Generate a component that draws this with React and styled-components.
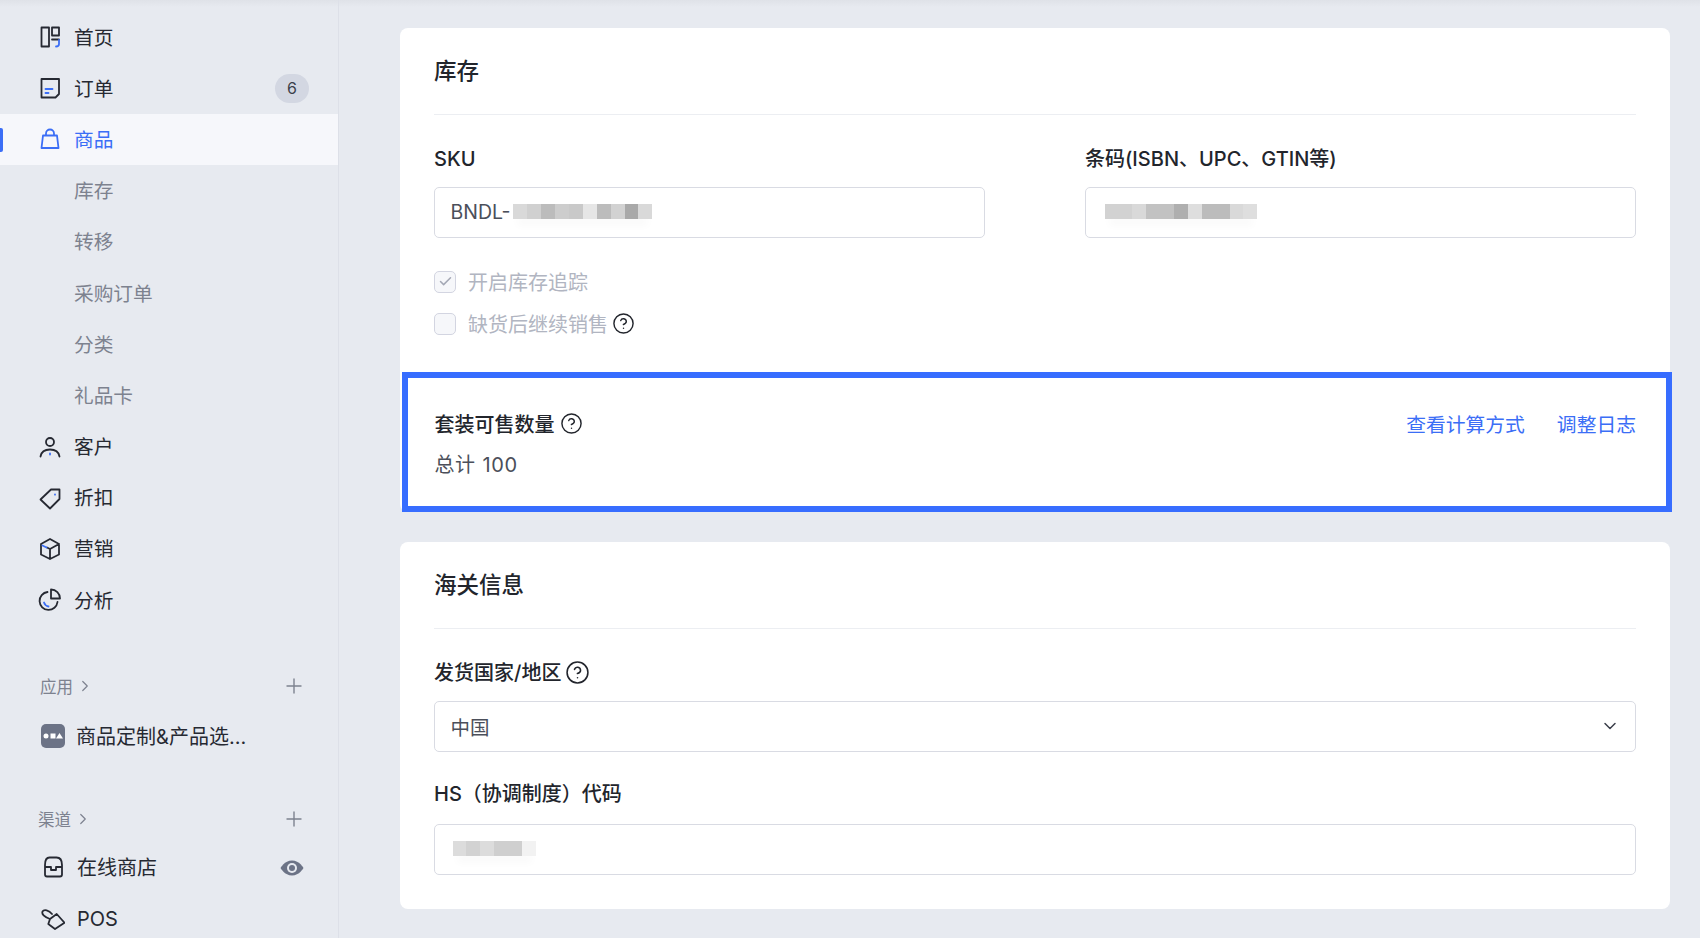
import React from "react";
import styled, { createGlobalStyle } from "styled-components";
import { Check, ChevronDown, ChevronRight, CircleHelp, Plus } from "lucide-react";

const BLUE = "#3b6ef6";

const GlobalStyle = createGlobalStyle`
  html, body {
    margin: 0;
    height: 938px;
    overflow: hidden;
    font-family: Inter, "Noto Sans CJK SC", sans-serif;
    color: #22252c;
  }
`;

const Page = styled.div`
  display: flex;
  height: 938px;
  overflow: hidden;
  background: linear-gradient(#dfe2e8, #e7eaf0 7px);
`;

const Sidebar = styled.nav`
  width: 339px;
  flex: none;
  box-sizing: border-box;
  padding-top: 11.5px;
  border-right: 1px solid #dde0e8;
`;

const NavRow = styled.div`
  position: relative;
  display: flex;
  align-items: center;
  gap: ${(p) => p.$gap || 12}px;
  height: 51.2px;
  margin-top: ${(p) => p.$top || 0}px;
  padding: 0 29px 0 ${(p) => p.$indent || 38}px;
  font-size: 19.5px;
  color: ${(p) => (p.$active ? BLUE : "#262932")};
  background: ${(p) => (p.$active ? "#f6f7fb" : "transparent")};
`;

const NavText = styled.span`
  font-size: ${(p) => p.$size || 19.7}px;
  margin-top: -2px;
`;

const ActiveMark = styled.i`
  position: absolute;
  left: 0;
  top: 14px;
  width: 2.5px;
  height: 24px;
  border-radius: 0 2px 2px 0;
  background: ${BLUE};
`;

const SubRow = styled(NavRow)`
  padding-left: 74px;
  color: #7d828f;
`;

const Badge = styled.span`
  margin-left: auto;
  margin-right: 0;
  width: 34px;
  height: 29px;
  border-radius: 15px;
  background: #d3d7e2;
  display: flex;
  align-items: center;
  justify-content: center;
  font-size: 16px;
  color: #3b3f4a;
`;

const GroupHead = styled.div`
  display: flex;
  align-items: center;
  gap: 3px;
  height: 36px;
  margin-top: ${(p) => p.$top}px;
  margin-bottom: ${(p) => p.$bottom}px;
  padding: 0 32px 0 ${(p) => p.$indent}px;
  font-size: 16.5px;
  color: #7d828f;
`;

const PlusSlot = styled.span`
  margin-left: auto;
  display: flex;
  color: #7d828f;
`;

const EyeSlot = styled.span`
  margin-left: auto;
  margin-right: 5px;
  display: flex;
`;

const Glyph = styled.svg`
  width: 24px;
  height: 24px;
  flex: none;
  fill: none;
  stroke: currentColor;
  stroke-width: 1.8;
  stroke-linejoin: round;
  stroke-linecap: round;
`;

const Accent = styled.path`
  stroke: ${BLUE};
`;

const Main = styled.main`
  flex: 1;
  padding: 28px 0 0 61px;
  display: flex;
  flex-direction: column;
  gap: 30px;
`;

const Card = styled.section`
  width: 1270px;
  box-sizing: border-box;
  background: #fff;
  border-radius: 8px;
`;

const StockBody = styled.div`
  padding: 0 34px 37.5px;
`;

const CustomsBody = styled.div`
  padding: 0 34px 34.5px;
`;

const CardTitle = styled.h2`
  margin: 0;
  height: 86.5px;
  box-sizing: border-box;
  padding-bottom: 3.5px;
  display: flex;
  align-items: center;
  font-size: 22.5px;
  font-weight: 500;
  border-bottom: 1px solid #eceef2;
`;

const FieldGrid = styled.div`
  display: grid;
  grid-template-columns: 551px 551px;
  gap: 100px;
  margin-top: 29px;
`;

const Label = styled.label`
  display: flex;
  align-items: center;
  gap: 4px;
  height: 30px;
  line-height: 30px;
  margin-bottom: ${(p) => p.$bottom || 13}px;
  margin-top: ${(p) => p.$top || 0}px;
  font-size: 20px;
  font-weight: 500;
  color: #22252c;
`;

const Input = styled.div`
  height: 51px;
  box-sizing: border-box;
  border: 1px solid #d9dbe3;
  border-radius: 5px;
  padding: 0 15.5px;
  display: flex;
  align-items: center;
  font-size: 19.5px;
  color: #4b4f5a;
`;

const SelectChevron = styled.span`
  margin-left: auto;
  display: flex;
  color: #3b3f4a;
`;

const Cells = styled.span`
  display: flex;
  margin-left: ${(p) => p.$left || 0}px;
  margin-top: -2px;
  filter: blur(0.5px);
  box-shadow: 0 10px 8px -4px rgba(0, 0, 0, 0.03);
`;

const Cell = styled.i`
  width: 13.9px;
  height: 15px;
  background: ${(p) => p.$shade};
`;

const CheckList = styled.div`
  margin-top: 33px;
  display: flex;
  flex-direction: column;
  gap: 20.3px;
`;

const CheckRow = styled.div`
  display: flex;
  align-items: center;
  height: 22px;
  font-size: 20px;
  color: #b1b5c1;
`;

const Box = styled.span`
  width: 22px;
  height: 22px;
  box-sizing: border-box;
  margin-right: 12px;
  border: 1.5px solid #d3d5e1;
  border-radius: 5px;
  background: #f6f7fa;
  display: flex;
  align-items: center;
  justify-content: center;
  color: #a4a8b5;
`;

const HelpSlot = styled.span`
  display: flex;
  margin-left: ${(p) => p.$left || 0}px;
  color: #22252c;
`;

const Bundle = styled.div`
  height: 140px;
  box-sizing: border-box;
  margin: 0 -2px 0 2px;
  padding: 30px 30px 0 26.5px;
  border: 6px solid #376dff;
  display: grid;
  grid-template-columns: 1fr auto;
  grid-template-rows: 30px 30px;
  row-gap: 10px;
  align-items: center;
`;

const BundleTitle = styled.div`
  display: flex;
  align-items: center;
  gap: 5px;
  font-size: 20px;
  font-weight: 500;
`;

const BundleLinks = styled.div`
  display: flex;
  gap: 32px;
  font-size: 19.8px;
  color: ${BLUE};
`;

const BundleTotal = styled.div`
  grid-column: 1 / -1;
  font-size: 20px;
  letter-spacing: 0.5px;
  word-spacing: 1px;
  color: #4b4f5a;
`;

const HomeIcon = () => (
  <Glyph viewBox="0 0 24 24">
    <rect x="3.5" y="2.5" width="7.5" height="19" />
    <rect x="14" y="2.5" width="7" height="8" />
    <path d="M14 14.5h7" />
    <Accent d="M21 15v4q0 2.5-3 2.5" />
  </Glyph>
);

const OrderIcon = () => (
  <Glyph viewBox="0 0 24 24">
    <path d="M3.5 3h17.500v15l-3.500 3.500H3.500z" />
    <Accent d="M7.500 13h7M7.500 17h3" />
  </Glyph>
);

const BagIcon = () => (
  <Glyph viewBox="0 0 24 24">
    <path d="M5 8.500h14l1.500 12.500h-17zM8 8.500V6.500a4 4 0 0 1 8 0v2" />
  </Glyph>
);

const PersonIcon = () => (
  <Glyph viewBox="0 0 24 24">
    <circle cx="12" cy="7" r="4" />
    <path d="M2.500 21.500c.8-4.500 4.500-7 9.500-7s8.700 2.500 9.500 7" />
    <Accent d="M12 18.500v1" />
  </Glyph>
);

const TagIcon = () => (
  <Glyph viewBox="0 0 24 24">
    <path d="M2.500 13.500 13 3.500h8.500v9.500L12 22.500z" />
    <Accent d="M17 8.500v.2" />
  </Glyph>
);

const CubeIcon = () => (
  <Glyph viewBox="0 0 24 24">
    <path d="M12 2l9 5v10.500L12 22l-9-4.500V7zM21 7l-9 5v10M12 12 9 10.500" />
    <Accent d="M4.500 8.500l4 2" />
  </Glyph>
);

const PieIcon = () => (
  <Glyph viewBox="0 0 24 24">
    <path d="M9.500 4a9 9 0 1 0 10 10M13 1.500a9 9 0 0 1 9 9h-9z" />
    <Accent d="M6 14.500a6 6 0 0 0 4.500 4" />
  </Glyph>
);

const StoreIcon = () => (
  <Glyph viewBox="0 0 24 24">
    <path d="M4 9c0-5 1.500-7.500 4.500-7.500h7c3 0 5.500 2.500 5.500 7.500v9.500q0 2-2 2H6q-2 0-2-2zM4 11h6M15 11h6M10 11v3h5v-3" />
  </Glyph>
);

const PosIcon = () => (
  <Glyph viewBox="0 0 24 24">
    <path d="M9 11l6.700-5L23.500 14.700 14 21l-6.700-5zM9 11C3 9 .5 6 1.500 3.500 3 1 8 2 11 6" />
  </Glyph>
);

const EyeIcon = () => (
  <svg width="24" height="24" viewBox="0 0 24 24">
    <path d="M.5 12S4.500 4.500 12 4.500 23.500 12 23.500 12 19.500 19.500 12 19.500.5 12 .5 12z" fill="#6c7386" />
    <circle cx="12" cy="12" r="5" fill="#e7eaf0" />
    <circle cx="12" cy="12" r="3" fill="#6c7386" />
  </svg>
);

const AppIcon = () => (
  <svg width="24" height="24" viewBox="0 0 24 24">
    <rect width="24" height="24" rx="5" fill="#6c7386" />
    <circle cx="5" cy="12" r="2.500" fill="#fff" />
    <rect x="9.500" y="9.500" width="5" height="5" fill="#fff" />
    <path d="M18.500 9l3.500 5.500h-7z" fill="#fff" />
  </svg>
);

const Redacted = ({ shades, left }) => (
  <Cells $left={left}>
    {shades.map((s, i) => (
      <Cell key={i} $shade={s} />
    ))}
  </Cells>
);

const Help = ({ size = 23, left }) => (
  <HelpSlot $left={left}>
    <CircleHelp size={size} strokeWidth={1.5} />
  </HelpSlot>
);

const MAIN_NAV = [
  { label: "首页", icon: <HomeIcon /> },
  { label: "订单", icon: <OrderIcon />, badge: 6 },
  { label: "商品", icon: <BagIcon />, active: true },
];

const SUB_NAV = ["库存", "转移", "采购订单", "分类", "礼品卡"];

const MORE_NAV = [
  { label: "客户", icon: <PersonIcon /> },
  { label: "折扣", icon: <TagIcon /> },
  { label: "营销", icon: <CubeIcon /> },
  { label: "分析", icon: <PieIcon /> },
];

const SKU_CELLS = ["#d9d9d9", "#d0d0d0", "#bcbcbc", "#cdcdcd", "#c9c9c9", "#e6e6e6", "#bcbcbc", "#d2d2d2", "#a9a9a9", "#d9d9d9"];
const BARCODE_CELLS = ["#d2d2d2", "#d2d2d2", "#d9d9d9", "#c2c2c2", "#c2c2c2", "#afafaf", "#dedede", "#bcbcbc", "#bcbcbc", "#d9d9d9", "#dedede"];
const HS_CELLS = ["#dcdcdc", "#d2d2d2", "#dcdcdc", "#cfcfcf", "#cfcfcf", "#f2f2f2"];

const App = () => {
  return (
    <Page>
      <GlobalStyle />
      <Sidebar>
        {MAIN_NAV.map((item) => (
          <NavRow key={item.label} $active={item.active}>
            {item.active && <ActiveMark />}
            {item.icon}
            <NavText>{item.label}</NavText>
            {item.badge && <Badge>{item.badge}</Badge>}
          </NavRow>
        ))}
        {SUB_NAV.map((label) => (
          <SubRow key={label}>
            <NavText>{label}</NavText>
          </SubRow>
        ))}
        {MORE_NAV.map((item) => (
          <NavRow key={item.label}>
            {item.icon}
            <NavText>{item.label}</NavText>
          </NavRow>
        ))}
        <GroupHead $top={42} $bottom={7} $indent={40}>
          应用
          <ChevronRight size={18} strokeWidth={1.6} />
          <PlusSlot>
            <Plus size={24} strokeWidth={1.4} />
          </PlusSlot>
        </GroupHead>
        <NavRow $indent={41} $gap={11}>
          <AppIcon />
          <NavText $size={20}>商品定制&产品选...</NavText>
        </NavRow>
        <GroupHead $top={39.5} $bottom={4.5} $indent={38}>
          渠道
          <ChevronRight size={18} strokeWidth={1.6} />
          <PlusSlot>
            <Plus size={24} strokeWidth={1.4} />
          </PlusSlot>
        </GroupHead>
        <NavRow $indent={41} $gap={12}>
          <StoreIcon />
          <NavText $size={20}>在线商店</NavText>
          <EyeSlot>
            <EyeIcon />
          </EyeSlot>
        </NavRow>
        <NavRow $indent={41} $gap={12} $top={1}>
          <PosIcon />
          <NavText $size={20}>POS</NavText>
        </NavRow>
      </Sidebar>
      <Main>
        <Card>
          <StockBody>
            <CardTitle>库存</CardTitle>
            <FieldGrid>
              <div>
                <Label>SKU</Label>
                <Input>
                  BNDL-
                  <Redacted shades={SKU_CELLS} left={3} />
                </Input>
              </div>
              <div>
                <Label>条码(ISBN、UPC、GTIN等)</Label>
                <Input>
                  <Redacted shades={BARCODE_CELLS} left={3} />
                </Input>
              </div>
            </FieldGrid>
            <CheckList>
              <CheckRow>
                <Box>
                  <Check size={15} strokeWidth={2.4} />
                </Box>
                开启库存追踪
              </CheckRow>
              <CheckRow>
                <Box />
                缺货后继续销售
                <Help left={4} />
              </CheckRow>
            </CheckList>
          </StockBody>
          <Bundle>
            <BundleTitle>
              套装可售数量
              <Help />
            </BundleTitle>
            <BundleLinks>
              <span>查看计算方式</span>
              <span>调整日志</span>
            </BundleLinks>
            <BundleTotal>总计 100</BundleTotal>
          </Bundle>
        </Card>
        <Card>
          <CustomsBody>
            <CardTitle>海关信息</CardTitle>
            <Label $top={29}>
              发货国家/地区
              <Help size={25} />
            </Label>
            <Input>
              中国
              <SelectChevron>
                <ChevronDown size={20} strokeWidth={1.8} />
              </SelectChevron>
            </Input>
            <Label $top={27.5} $bottom={14.5}>
              HS（协调制度）代码
            </Label>
            <Input>
              <Redacted shades={HS_CELLS} left={2} />
            </Input>
          </CustomsBody>
        </Card>
      </Main>
    </Page>
  );
};

export default App;
